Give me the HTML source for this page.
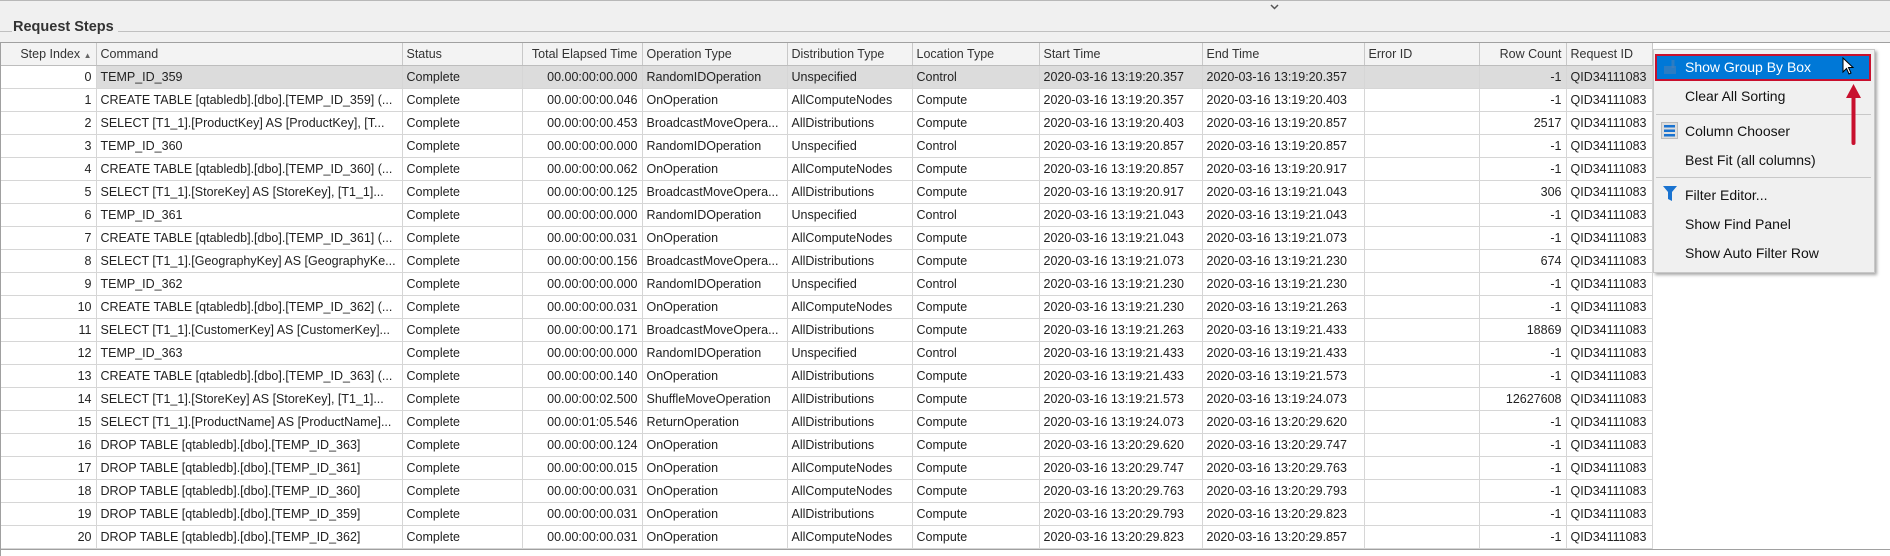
<!DOCTYPE html>
<html><head><meta charset="utf-8"><style>
body{margin:0;width:1890px;height:555px;background:#f0f0f0;position:relative;overflow:hidden;font-family:"Liberation Sans",sans-serif;color:#222}
.topline{position:absolute;left:0;top:0;width:1890px;height:1px;background:#b8b8b8}
.title{position:absolute;left:12px;top:19px;font-weight:bold;font-size:14.5px;color:#333;background:#f0f0f0;padding:0 4px 0 1px}
.tline{position:absolute;left:0;top:31px;width:1890px;height:1px;background:#c0c0c0}
.grid{position:absolute;left:0;top:42px;width:1890px;height:513px;background:#fff;border-top:1px solid #a0a0a0;border-left:1px solid #a0a0a0}
table{border-collapse:collapse;table-layout:fixed;font-size:12.5px;position:absolute;left:0;top:0}
td,th{height:22px;padding:0 4px;border-right:1px solid #d6d6d6;border-bottom:1px solid #d6d6d6;white-space:nowrap;overflow:hidden;font-weight:normal;text-align:left}
th{background:#f3f3f3;border-right:1px solid #c8c8c8;border-bottom:1px solid #bdbdbd;color:#333}
.r{text-align:right}
tr.sel td{background:#dcdcdc}
tr.sel td:first-child{background:#fff}
.menu{position:absolute;left:1653px;top:49px;width:220px;height:222px;background:#f0f0f0;border:1px solid #c8c8c8;box-shadow:2px 2px 3px rgba(0,0,0,.35);font-family:"Liberation Sans",sans-serif;font-size:14px;color:#111}
.mi{position:absolute;left:31px;line-height:16px}
.hl{position:absolute;left:1px;top:4px;width:216px;height:27px;background:#0078d7;border:2px solid #c8102e;box-sizing:border-box}
.sep{position:absolute;left:2px;width:215px;height:1px;background:#c8c8c8}
.bottom{position:absolute;left:0;top:549px;width:1890px;height:1px;background:#a0a0a0}
</style></head><body>
<div class="topline"></div>
<svg style="position:absolute;left:1270px;top:4px" width="9" height="6"><path d="M1 1 L4.5 4.5 L8 1" stroke="#555" stroke-width="1.5" fill="none"/></svg>
<div class="tline"></div>
<div class="title">Request Steps</div>
<div class="grid">
<table>
<colgroup><col style="width:95px"><col style="width:306px"><col style="width:120px"><col style="width:120px"><col style="width:145px"><col style="width:125px"><col style="width:127px"><col style="width:163px"><col style="width:162px"><col style="width:115px"><col style="width:87px"><col style="width:86px"></colgroup>
<tr><th class="r">Step Index <span style="font-size:8px;color:#666">&#9650;</span></th><th>Command</th><th>Status</th><th class="r">Total Elapsed Time</th><th>Operation Type</th><th>Distribution Type</th><th>Location Type</th><th>Start Time</th><th>End Time</th><th>Error ID</th><th class="r">Row Count</th><th>Request ID</th></tr>
<tr class="sel"><td class="r">0</td><td>TEMP_ID_359</td><td>Complete</td><td class="r">00.00:00:00.000</td><td>RandomIDOperation</td><td>Unspecified</td><td>Control</td><td>2020-03-16 13:19:20.357</td><td>2020-03-16 13:19:20.357</td><td></td><td class="r">-1</td><td>QID34111083</td></tr>
<tr><td class="r">1</td><td>CREATE TABLE [qtabledb].[dbo].[TEMP_ID_359] (...</td><td>Complete</td><td class="r">00.00:00:00.046</td><td>OnOperation</td><td>AllComputeNodes</td><td>Compute</td><td>2020-03-16 13:19:20.357</td><td>2020-03-16 13:19:20.403</td><td></td><td class="r">-1</td><td>QID34111083</td></tr>
<tr><td class="r">2</td><td>SELECT [T1_1].[ProductKey] AS [ProductKey], [T...</td><td>Complete</td><td class="r">00.00:00:00.453</td><td>BroadcastMoveOpera...</td><td>AllDistributions</td><td>Compute</td><td>2020-03-16 13:19:20.403</td><td>2020-03-16 13:19:20.857</td><td></td><td class="r">2517</td><td>QID34111083</td></tr>
<tr><td class="r">3</td><td>TEMP_ID_360</td><td>Complete</td><td class="r">00.00:00:00.000</td><td>RandomIDOperation</td><td>Unspecified</td><td>Control</td><td>2020-03-16 13:19:20.857</td><td>2020-03-16 13:19:20.857</td><td></td><td class="r">-1</td><td>QID34111083</td></tr>
<tr><td class="r">4</td><td>CREATE TABLE [qtabledb].[dbo].[TEMP_ID_360] (...</td><td>Complete</td><td class="r">00.00:00:00.062</td><td>OnOperation</td><td>AllComputeNodes</td><td>Compute</td><td>2020-03-16 13:19:20.857</td><td>2020-03-16 13:19:20.917</td><td></td><td class="r">-1</td><td>QID34111083</td></tr>
<tr><td class="r">5</td><td>SELECT [T1_1].[StoreKey] AS [StoreKey], [T1_1]...</td><td>Complete</td><td class="r">00.00:00:00.125</td><td>BroadcastMoveOpera...</td><td>AllDistributions</td><td>Compute</td><td>2020-03-16 13:19:20.917</td><td>2020-03-16 13:19:21.043</td><td></td><td class="r">306</td><td>QID34111083</td></tr>
<tr><td class="r">6</td><td>TEMP_ID_361</td><td>Complete</td><td class="r">00.00:00:00.000</td><td>RandomIDOperation</td><td>Unspecified</td><td>Control</td><td>2020-03-16 13:19:21.043</td><td>2020-03-16 13:19:21.043</td><td></td><td class="r">-1</td><td>QID34111083</td></tr>
<tr><td class="r">7</td><td>CREATE TABLE [qtabledb].[dbo].[TEMP_ID_361] (...</td><td>Complete</td><td class="r">00.00:00:00.031</td><td>OnOperation</td><td>AllComputeNodes</td><td>Compute</td><td>2020-03-16 13:19:21.043</td><td>2020-03-16 13:19:21.073</td><td></td><td class="r">-1</td><td>QID34111083</td></tr>
<tr><td class="r">8</td><td>SELECT [T1_1].[GeographyKey] AS [GeographyKe...</td><td>Complete</td><td class="r">00.00:00:00.156</td><td>BroadcastMoveOpera...</td><td>AllDistributions</td><td>Compute</td><td>2020-03-16 13:19:21.073</td><td>2020-03-16 13:19:21.230</td><td></td><td class="r">674</td><td>QID34111083</td></tr>
<tr><td class="r">9</td><td>TEMP_ID_362</td><td>Complete</td><td class="r">00.00:00:00.000</td><td>RandomIDOperation</td><td>Unspecified</td><td>Control</td><td>2020-03-16 13:19:21.230</td><td>2020-03-16 13:19:21.230</td><td></td><td class="r">-1</td><td>QID34111083</td></tr>
<tr><td class="r">10</td><td>CREATE TABLE [qtabledb].[dbo].[TEMP_ID_362] (...</td><td>Complete</td><td class="r">00.00:00:00.031</td><td>OnOperation</td><td>AllComputeNodes</td><td>Compute</td><td>2020-03-16 13:19:21.230</td><td>2020-03-16 13:19:21.263</td><td></td><td class="r">-1</td><td>QID34111083</td></tr>
<tr><td class="r">11</td><td>SELECT [T1_1].[CustomerKey] AS [CustomerKey]...</td><td>Complete</td><td class="r">00.00:00:00.171</td><td>BroadcastMoveOpera...</td><td>AllDistributions</td><td>Compute</td><td>2020-03-16 13:19:21.263</td><td>2020-03-16 13:19:21.433</td><td></td><td class="r">18869</td><td>QID34111083</td></tr>
<tr><td class="r">12</td><td>TEMP_ID_363</td><td>Complete</td><td class="r">00.00:00:00.000</td><td>RandomIDOperation</td><td>Unspecified</td><td>Control</td><td>2020-03-16 13:19:21.433</td><td>2020-03-16 13:19:21.433</td><td></td><td class="r">-1</td><td>QID34111083</td></tr>
<tr><td class="r">13</td><td>CREATE TABLE [qtabledb].[dbo].[TEMP_ID_363] (...</td><td>Complete</td><td class="r">00.00:00:00.140</td><td>OnOperation</td><td>AllDistributions</td><td>Compute</td><td>2020-03-16 13:19:21.433</td><td>2020-03-16 13:19:21.573</td><td></td><td class="r">-1</td><td>QID34111083</td></tr>
<tr><td class="r">14</td><td>SELECT [T1_1].[StoreKey] AS [StoreKey], [T1_1]...</td><td>Complete</td><td class="r">00.00:00:02.500</td><td>ShuffleMoveOperation</td><td>AllDistributions</td><td>Compute</td><td>2020-03-16 13:19:21.573</td><td>2020-03-16 13:19:24.073</td><td></td><td class="r">12627608</td><td>QID34111083</td></tr>
<tr><td class="r">15</td><td>SELECT [T1_1].[ProductName] AS [ProductName]...</td><td>Complete</td><td class="r">00.00:01:05.546</td><td>ReturnOperation</td><td>AllDistributions</td><td>Compute</td><td>2020-03-16 13:19:24.073</td><td>2020-03-16 13:20:29.620</td><td></td><td class="r">-1</td><td>QID34111083</td></tr>
<tr><td class="r">16</td><td>DROP TABLE [qtabledb].[dbo].[TEMP_ID_363]</td><td>Complete</td><td class="r">00.00:00:00.124</td><td>OnOperation</td><td>AllDistributions</td><td>Compute</td><td>2020-03-16 13:20:29.620</td><td>2020-03-16 13:20:29.747</td><td></td><td class="r">-1</td><td>QID34111083</td></tr>
<tr><td class="r">17</td><td>DROP TABLE [qtabledb].[dbo].[TEMP_ID_361]</td><td>Complete</td><td class="r">00.00:00:00.015</td><td>OnOperation</td><td>AllComputeNodes</td><td>Compute</td><td>2020-03-16 13:20:29.747</td><td>2020-03-16 13:20:29.763</td><td></td><td class="r">-1</td><td>QID34111083</td></tr>
<tr><td class="r">18</td><td>DROP TABLE [qtabledb].[dbo].[TEMP_ID_360]</td><td>Complete</td><td class="r">00.00:00:00.031</td><td>OnOperation</td><td>AllComputeNodes</td><td>Compute</td><td>2020-03-16 13:20:29.763</td><td>2020-03-16 13:20:29.793</td><td></td><td class="r">-1</td><td>QID34111083</td></tr>
<tr><td class="r">19</td><td>DROP TABLE [qtabledb].[dbo].[TEMP_ID_359]</td><td>Complete</td><td class="r">00.00:00:00.031</td><td>OnOperation</td><td>AllDistributions</td><td>Compute</td><td>2020-03-16 13:20:29.793</td><td>2020-03-16 13:20:29.823</td><td></td><td class="r">-1</td><td>QID34111083</td></tr>
<tr><td class="r">20</td><td>DROP TABLE [qtabledb].[dbo].[TEMP_ID_362]</td><td>Complete</td><td class="r">00.00:00:00.031</td><td>OnOperation</td><td>AllComputeNodes</td><td>Compute</td><td>2020-03-16 13:20:29.823</td><td>2020-03-16 13:20:29.857</td><td></td><td class="r">-1</td><td>QID34111083</td></tr>
</table>
</div>
<div class="bottom"></div>
<div class="menu">
<div class="hl"></div>
<svg style="position:absolute;left:9px;top:9px" width="16" height="16"><rect x="1" y="7" width="12" height="8" fill="#4a7fb5" opacity=".6"/><path d="M10 1 L10 9" stroke="#4a7fb5" stroke-width="3" opacity=".6"/></svg>
<div class="mi" style="top:9px;color:#fff">Show Group By Box</div>
<svg style="position:absolute;left:188px;top:7px" width="14" height="20"><path d="M1 1 L1 15 L4.5 11.5 L7 17 L9 16 L6.5 10.5 L11 10.5 Z" fill="#fff" stroke="#000" stroke-width="1"/></svg>
<div class="mi" style="top:38px">Clear All Sorting</div>
<div class="sep" style="top:64px"></div>
<svg style="position:absolute;left:7px;top:72px" width="18" height="18"><rect x="0.5" y="0.5" width="16" height="16" fill="#ddd" stroke="#bbb"/><rect x="3" y="3" width="11" height="2.5" fill="#1a73d0"/><rect x="3" y="7.5" width="11" height="2.5" fill="#1a73d0"/><rect x="3" y="12" width="11" height="2.5" fill="#1a73d0"/></svg>
<div class="mi" style="top:73px">Column Chooser</div>
<div class="mi" style="top:102px">Best Fit (all columns)</div>
<div class="sep" style="top:127px"></div>
<svg style="position:absolute;left:8px;top:135px" width="16" height="18"><path d="M1 1 L15 1 L10 7 L10 16 L6 14 L6 7 Z" fill="#1a73d0"/></svg>
<div class="mi" style="top:137px">Filter Editor...</div>
<div class="mi" style="top:166px">Show Find Panel</div>
<div class="mi" style="top:195px">Show Auto Filter Row</div>
</div>
<svg style="position:absolute;left:1844px;top:82px" width="20" height="64"><path d="M9.5 61 L9.5 12" stroke="#c8102e" stroke-width="4" stroke-linecap="round"/><path d="M2 16 L9.5 2 L17 16 Z" fill="#c8102e"/></svg>
</body></html>
